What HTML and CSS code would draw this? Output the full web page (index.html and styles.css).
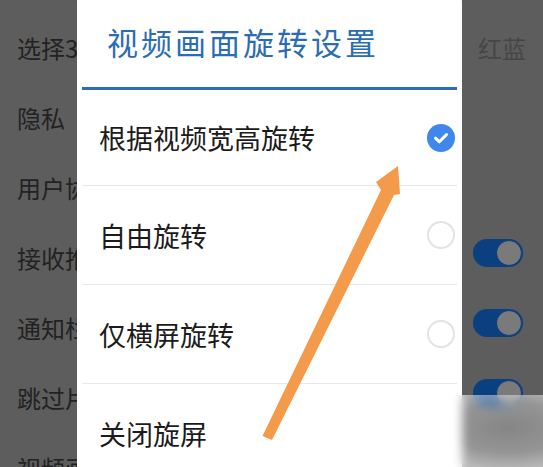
FILE: index.html
```html
<!DOCTYPE html>
<html lang="zh">
<head>
<meta charset="utf-8">
<link rel="stylesheet" href="styles.css">
</head>
<body>
<div class="screen">
  <div class="settings">
    <div class="srow"><span class="label">选择3D播放模式</span><span class="val">红蓝</span></div>
    <div class="srow"><span class="label">隐私</span></div>
    <div class="srow"><span class="label">用户协议</span></div>
    <div class="srow"><span class="label">接收推送消息</span><span class="toggle"><span class="knob"></span></span></div>
    <div class="srow"><span class="label">通知栏控制</span><span class="toggle"><span class="knob"></span></span></div>
    <div class="srow"><span class="label">跳过片头片尾</span><span class="toggle"><span class="knob"></span></span></div>
    <div class="srow"><span class="label">视频画面旋转</span></div>
  </div>

  <div class="dialog">
    <div class="dhead"><span class="dtitle">视频画面旋转设置</span></div>
    <div class="dline"></div>
    <div class="opt first"><span>根据视频宽高旋转</span>
      <svg class="check" width="28" height="28" viewBox="0 0 28 28"><circle cx="14" cy="14" r="14" fill="#3f87eb"/><path d="M8.5 14.2 L12.3 17.8 L19.5 10.6" fill="none" stroke="#fff" stroke-width="3" stroke-linecap="round" stroke-linejoin="round"/></svg>
    </div>
    <div class="opt"><span>自由旋转</span><span class="radio"></span></div>
    <div class="opt"><span>仅横屏旋转</span><span class="radio"></span></div>
    <div class="opt last"><span>关闭旋屏</span></div>
  </div>

  <svg class="arrow" width="543" height="467" viewBox="0 0 543 467">
    <polygon points="262.5,436 381,190 376,182 398,166 400,194 394,195 272,440" fill="#f39a4b"/>
  </svg>

  <div class="mark"></div>
</div>
</body>
</html>
```

FILE: styles.css
```css
* { box-sizing: border-box; margin: 0; padding: 0; }
html, body { width: 543px; height: 467px; overflow: hidden; }
body {
  background: #5d5d5d;
  font-family: "Noto Sans CJK SC", "Noto Sans", sans-serif;
}
.screen { position: relative; width: 543px; height: 467px; overflow: hidden; }

.settings { padding-top: 12px; display: flex; flex-direction: column; }
.srow {
  height: 70px;
  display: flex;
  align-items: center;
  justify-content: space-between;
  padding: 0 17px 0 17px;
  font-size: 24px;
  color: #222;
  white-space: nowrap;
}
.label {
  max-width: 60px;
  overflow: hidden;
  white-space: nowrap;
}
.val { color: #464646; }
.toggle {
  position: relative;
  width: 50px;
  height: 28px;
  border-radius: 14px;
  background: #0a3f80;
  margin-right: 3px;
  margin-bottom: 8px;
}
.knob {
  position: absolute;
  right: 1px;
  top: 1px;
  width: 26px;
  height: 26px;
  border-radius: 50%;
  background: #7a7a7a;
  border: 1.5px solid #0a3f80;
}

.dialog {
  position: absolute;
  left: 77px;
  top: -10px;
  width: 385px;
  height: 520px;
  background: #fff;
  border-radius: 12px;
}
.dhead {
  height: 97px;
  display: flex;
  align-items: center;
  padding: 5px 0 0 30px;
}
.dtitle {
  font-size: 31px;
  letter-spacing: 3px;
  color: #2b6db3;
  white-space: nowrap;
}
.dline { height: 3px; margin: 0 5px; background: #2e6db3; }
.opt {
  height: 99px;
  margin: 0 5px;
  padding: 0 2px 0 17px;
  display: flex;
  align-items: center;
  justify-content: space-between;
  border-bottom: 1px solid #e8e8e8;
  font-size: 27px;
  color: #1b1b1b;
  white-space: nowrap;
}
.opt.first { height: 96px; }
.opt.last { border-bottom: none; }
.check { display: block; }
.radio {
  width: 28px;
  height: 28px;
  border-radius: 50%;
  border: 2px solid #e3e3e3;
}

.arrow { position: absolute; left: 0; top: 0; }

.mark {
  position: absolute;
  left: 420px;
  top: 395px;
  width: 123px;
  height: 72px;
  backdrop-filter: blur(5px);
  background: radial-gradient(ellipse at 72% 45%, rgba(255,255,255,0.25) 0%, rgba(255,255,255,0.35) 45%, rgba(255,255,255,0.75) 100%);
}
```
